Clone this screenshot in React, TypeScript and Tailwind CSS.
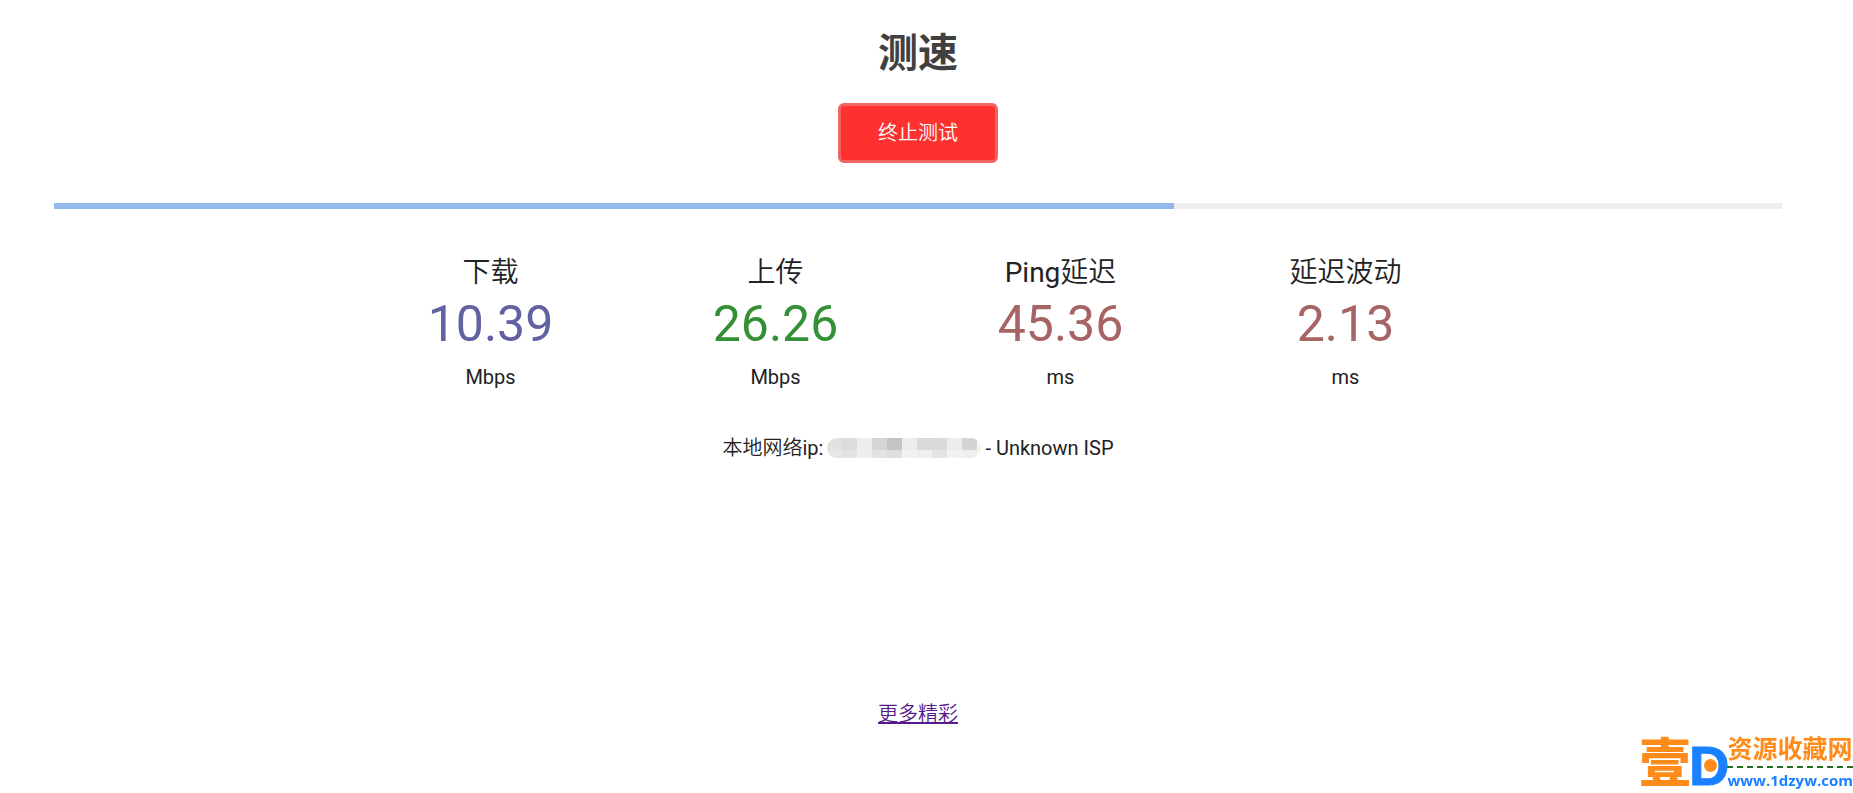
const metrics = [
  { latin: "", label: "下载", value: "10.39", unit: "Mbps", color: "text-[#6262a2]" },
  { latin: "", label: "上传", value: "26.26", unit: "Mbps", color: "text-[#349036]" },
  { latin: "Ping", label: "延迟", value: "45.36", unit: "ms", color: "text-[#a66464]" },
  { latin: "", label: "延迟波动", value: "2.13", unit: "ms", color: "text-[#a66464]" },
];

const maskTop = ["#e2e2e2", "#dcdcdc", "#eeeeee", "#d6d6d6", "#c4c4c4", "#ececec", "#d9d9d9", "#dadada", "#ececec", "#d4d4d4", "#f2f2f2"];
const maskBottom = ["#e6e6e6", "#e2e2e2", "#eeeeee", "#e2e2e2", "#dedede", "#f2f2f2", "#f0f0f0", "#e4e4e4", "#f2f2f2", "#eeeeee", "#f4f4f4"];

function MaskedAddress() {
  return (
    <span
      role="img"
      aria-label="IP"
      className="grid h-5 w-[154px] grid-cols-[repeat(10,15px)_1fr] grid-rows-[12px_8px] overflow-hidden rounded-full"
    >
      {[...maskTop, ...maskBottom].map((color, i) => (
        <span key={i} style={{ backgroundColor: color }} />
      ))}
    </span>
  );
}

function SiteMark() {
  return (
    <div className="fixed right-0 bottom-0 flex items-end whitespace-nowrap">
      <span className="text-[52px] leading-[56px] font-black text-[#ff8c1a]">壹</span>
      <span className="relative -mx-0.5 font-['Liberation_Sans',sans-serif] text-[56px] leading-[54px] font-bold text-[#1a80ff] [-webkit-text-stroke:1px_#1a80ff]">
        D
        <span className="absolute top-5 left-[15px] size-[13px] rounded-full bg-[#ff8c1a]" />
      </span>
      <span className="flex flex-col pb-px">
        <span className="text-[25px] leading-7 font-bold text-[#ff8c1a]">资源收藏网</span>
        <span className="mt-0.5 border-t-2 border-dashed border-[#207020]" />
        <a href="#" className="font-['Open_Sans',sans-serif] text-[15px] leading-6 font-bold text-[#1a80ff]">
          www.1dzyw.com
        </a>
      </span>
    </div>
  );
}

export default function App() {
  return (
    <div className="min-h-screen bg-white pr-[17px] font-[Roboto,'Noto_Sans_CJK_SC',sans-serif] text-xl leading-[30px] text-[#222222]">
      <main className="flex flex-col items-center px-[54px] pt-6">
        <h1 className="text-[40px] leading-[60px] font-bold text-[#404040]">测速</h1>
        <button
          type="button"
          className="mt-[19px] h-[60px] w-40 rounded-md border-3 border-[#f06464] bg-[#ff3030] font-[350] text-white"
        >
          终止测试
        </button>
        <div
          role="progressbar"
          aria-valuenow={65}
          aria-valuemin={0}
          aria-valuemax={100}
          aria-label="测速"
          className="mt-10 h-1.5 w-full bg-[#eeeeee]"
        >
          <div className="h-full bg-[#90bbe8]" style={{ width: "64.8%" }} />
        </div>
        <section className="mt-[43px] grid w-full max-w-[1140px] grid-cols-4 text-center">
          {metrics.map((m) => (
            <div key={m.label}>
              <h2 className="text-[28px] leading-[42px]">
                {m.latin}
                <span className="font-[350]">{m.label}</span>
              </h2>
              <div className={`text-[50px] leading-[60px] ${m.color}`}>{m.value}</div>
              <div className="mt-2">{m.unit}</div>
            </div>
          ))}
        </section>
        <p className="mt-[41px] flex items-center gap-1">
          <span>
            <span className="font-[350]">本地网络</span>ip:
          </span>
          <MaskedAddress />
          <span>- Unknown ISP</span>
        </p>
        <a href="#" className="mt-[236px] font-[350] text-[#551a8b] underline">
          更多精彩
        </a>
      </main>
      <SiteMark />
    </div>
  );
}
